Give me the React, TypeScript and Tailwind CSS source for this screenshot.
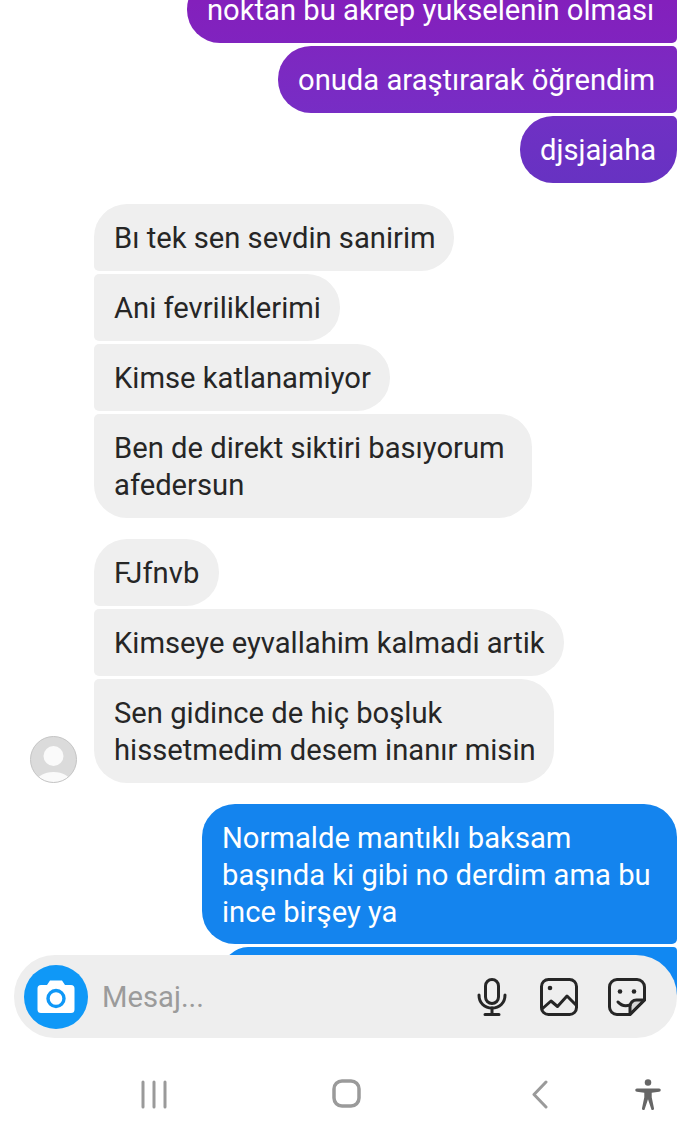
import React from "react";

function Out({ children, cls }: { children?: React.ReactNode; cls: string }) {
  return (
    <div className={`self-end px-5 pt-[16px] pb-[14px] text-white whitespace-nowrap ${cls}`}>{children}</div>
  );
}
function In({ children, cls }: { children: React.ReactNode; cls: string }) {
  return (
    <div className={`self-start bg-[#efefef] px-5 pt-[16px] pb-[14px] text-[#262626] whitespace-nowrap ${cls}`}>{children}</div>
  );
}

export default function App() {
  return (
    <div className="relative h-[1133px] w-[690px] overflow-hidden bg-white text-[29.2px] leading-[37px] [font-family:Roboto,sans-serif]">
      <div className="flex flex-col pr-[13px] -mt-[24px]">
        <div className="flex flex-col gap-[3px]">
          <Out cls="w-[490px] rounded-l-[33px] rounded-r-[5px] bg-gradient-to-b from-[#851eba] to-[#8023bf]">noktan bu akrep yukselenin olması</Out>
          <Out cls="w-[399px] rounded-l-[33px] rounded-r-[5px] bg-gradient-to-b from-[#7e27c0] to-[#772dc5]">onuda araştırarak öğrendim</Out>
          <Out cls="w-[157px] rounded-l-[33px] rounded-tr-[5px] rounded-br-[33px] bg-gradient-to-b from-[#7030c4] to-[#6732c2]">djsjajaha</Out>
        </div>

        <div className="mt-[21px] flex flex-col gap-[3px] pl-[94px]">
          <In cls="w-[360px] rounded-r-[33px] rounded-tl-[33px] rounded-bl-[5px]">Bı tek sen sevdin sanirim</In>
          <In cls="w-[246px] rounded-r-[33px] rounded-l-[5px]">Ani fevriliklerimi</In>
          <In cls="w-[296px] rounded-r-[33px] rounded-l-[5px]">Kimse katlanamiyor</In>
          <In cls="w-[438px] rounded-r-[33px] rounded-tl-[5px] rounded-bl-[33px]">
            Ben de direkt siktiri basıyorum
            <br />
            afedersun
          </In>
        </div>

        <div className="mt-[21px] flex items-end gap-[17px] pl-[30px]">
          <svg width="47" height="47" viewBox="0 0 47 47" className="shrink-0">
            <defs>
              <clipPath id="av">
                <circle cx="23.5" cy="23.5" r="23" />
              </clipPath>
            </defs>
            <circle cx="23.5" cy="23.5" r="23" fill="#dbdbdb" />
            <g clipPath="url(#av)">
              <circle cx="23.5" cy="20" r="10" fill="#fafafa" />
              <ellipse cx="23.5" cy="46" rx="17" ry="10" fill="#fafafa" />
            </g>
            <circle cx="23.5" cy="23.5" r="23" fill="none" stroke="#c4c4c4" strokeWidth="1" />
          </svg>
          <div className="flex flex-col gap-[3px]">
            <In cls="w-[125px] rounded-r-[33px] rounded-tl-[33px] rounded-bl-[5px]">FJfnvb</In>
            <In cls="w-[470px] rounded-r-[33px] rounded-l-[5px]">Kimseye eyvallahim kalmadi artik</In>
            <In cls="w-[460px] rounded-r-[33px] rounded-tl-[5px] rounded-bl-[33px]">
              Sen gidince de hiç boşluk
              <br />
              hissetmedim desem inanır misin
            </In>
          </div>
        </div>

        <div className="mt-[21px] flex flex-col gap-[3px]">
          <Out cls="h-[140px] w-[475px] rounded-l-[33px] rounded-tr-[33px] rounded-br-[5px] bg-[#1484ee]">
            Normalde mantıklı baksam
            <br />
            başında ki gibi no derdim ama bu
            <br />
            ince birşey ya
          </Out>
          <Out cls="h-[50px] w-[454px] rounded-l-[33px] rounded-r-[5px] bg-[#1188f2]" />
        </div>
      </div>

      <div className="absolute bottom-0 left-0 right-0 h-[178px] pl-[14px] pr-[13px]">
        <div className="flex h-[83px] items-center rounded-[41px] bg-[#eeeeee] pl-[10px] pr-[31px]">
          <div className="flex h-[64px] w-[64px] shrink-0 items-center justify-center rounded-full bg-[#0f98f7]">
            <svg width="40" height="36" viewBox="0 0 40 36">
              <path d="M5 6h6l3-4.5h12L29 6h6a3.5 3.5 0 0 1 3.5 3.5v21A3.5 3.5 0 0 1 35 34H5a3.5 3.5 0 0 1-3.5-3.5v-21A3.5 3.5 0 0 1 5 6z" fill="#fff" />
              <circle cx="20" cy="19.5" r="8" fill="none" stroke="#0f98f7" strokeWidth="3.4" />
            </svg>
          </div>
          <span className="ml-[14px] mt-[2px] text-[#9b9b9b]">Mesaj...</span>
          <div className="ml-auto flex items-center">
            <svg width="30" height="38" viewBox="0 0 30 38" fill="none" stroke="#262626" strokeWidth="3" strokeLinecap="round" strokeLinejoin="round" className="mr-[33px]">
              <rect x="8.5" y="1.5" width="13" height="24" rx="6.5" />
              <path d="M2 17c0 8 5.5 13 13 13s13-5 13-13" />
              <path d="M15 30v6M8 36.500h14" />
            </svg>
            <svg width="38" height="38" viewBox="0 0 38 38" fill="none" stroke="#262626" strokeWidth="3" strokeLinecap="round" strokeLinejoin="round" className="mr-[30px]">
              <rect x="1.500" y="1.500" width="35" height="35" rx="7" />
              <circle cx="10" cy="10" r="2.300" fill="#262626" stroke="none" />
              <path d="M2 31l9-8 6.500 5.500L27 18l9 9" />
            </svg>
            <svg width="38" height="38" viewBox="0 0 38 38" fill="none" stroke="#262626" strokeWidth="3" strokeLinecap="round" strokeLinejoin="round">
              <path d="M22 36.500H9a7.500 7.500 0 0 1-7.500-7.500V9A7.500 7.500 0 0 1 9 1.500h20A7.500 7.500 0 0 1 36.500 9v13z" />
              <path d="M36.500 22h-8a6.500 6.500 0 0 0-6.500 6.500v8z" fill="#262626" fillOpacity="0.12" />
              <path d="M10 24c3 3.500 7 4.500 12 3" />
              <circle cx="12" cy="13.500" r="2.300" fill="#262626" stroke="none" />
              <circle cx="26" cy="13.500" r="2.300" fill="#262626" stroke="none" />
            </svg>
          </div>
        </div>

        <div className="relative mt-[41px] h-[40px]">
          <svg className="absolute left-[126px] top-0" width="28" height="30" viewBox="0 0 28 30" stroke="#9a9a9a" strokeWidth="3" strokeLinecap="round">
            <path d="M3 3v25M14 3v25M25 3v25" />
          </svg>
          <svg className="absolute left-[318px] top-0" width="30" height="30" viewBox="0 0 30 30" fill="none" stroke="#9a9a9a" strokeWidth="3.500">
            <rect x="2" y="2" width="25" height="25" rx="8" />
          </svg>
          <svg className="absolute left-[516px] top-0" width="20" height="30" viewBox="0 0 20 30" fill="none" stroke="#9a9a9a" strokeWidth="3" strokeLinecap="round" strokeLinejoin="round">
            <path d="M16 3L4 15.500 16 28" />
          </svg>
          <svg className="absolute left-[621px] top-[-1px]" width="26" height="33" viewBox="0 0 28 34" fill="#666666">
            <circle cx="14" cy="4" r="3.500" />
            <path d="M2 10.500h24a1.300 1.300 0 0 1 0 3.500l-8 1v5l2.500 12a1.500 1.500 0 0 1-3 .5L14 22l-3.500 10.500a1.500 1.500 0 0 1-3-.5L10 20v-5l-8-1a1.300 1.300 0 0 1 0-3.500z" />
          </svg>
        </div>
      </div>
    </div>
  );
}
